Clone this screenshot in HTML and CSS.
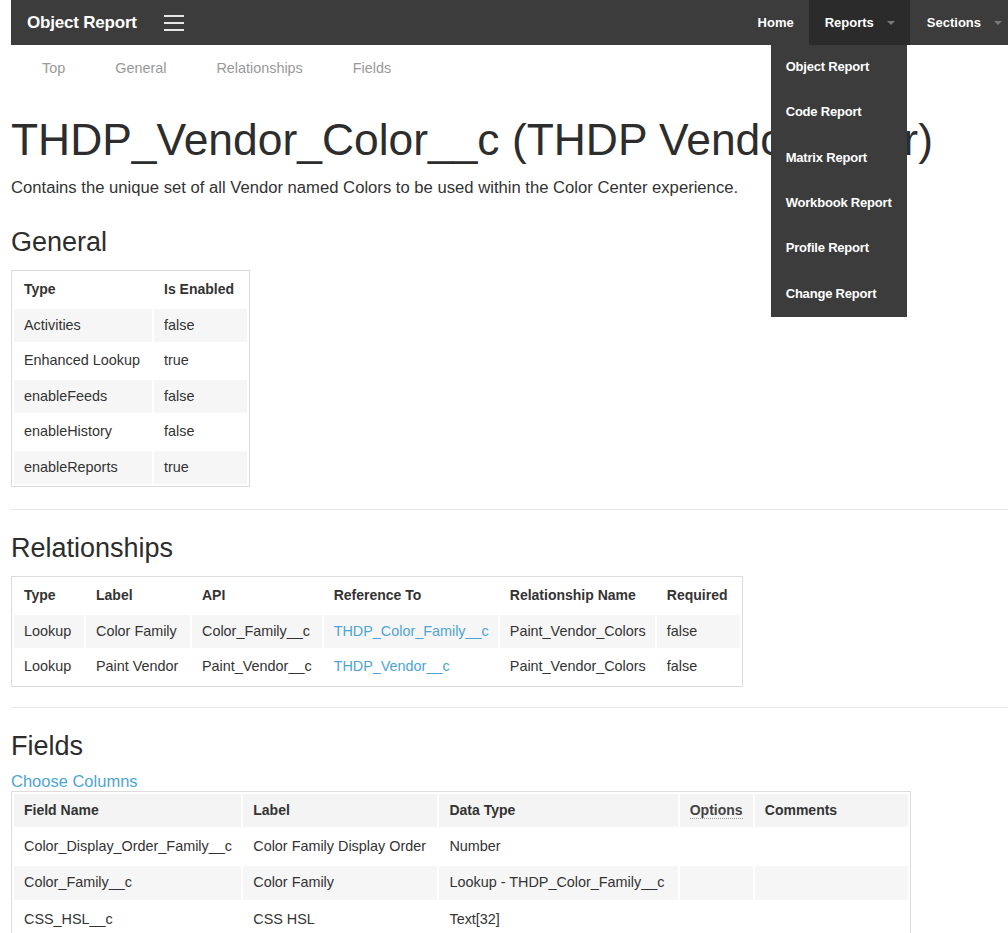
FILE: index.html
```html
<!DOCTYPE html>
<html>
<head>
<meta charset="utf-8">
<link rel="stylesheet" href="styles.css">
</head>
<body>
<div class="navbar">
  <div class="brand">Object Report</div>
  <div class="burger"><svg width="20" height="16" viewBox="0 0 20 16"><rect x="0" y="0" width="20" height="2" fill="#e6e6e6"/><rect x="0" y="7" width="20" height="2" fill="#e6e6e6"/><rect x="0" y="14" width="20" height="2" fill="#e6e6e6"/></svg></div>
  <div class="spacer"></div>
  <ul class="navlinks">
    <li class="item">Home</li>
    <li class="item active">Reports<span class="caret"></span>
      <ul class="dropdown">
        <li>Object Report</li>
        <li>Code Report</li>
        <li>Matrix Report</li>
        <li>Workbook Report</li>
        <li>Profile Report</li>
        <li>Change Report</li>
      </ul>
    </li>
    <li class="item">Sections<span class="caret"></span></li>
  </ul>
</div>
<div class="page">
  <ul class="subnav">
    <li>Top</li>
    <li>General</li>
    <li>Relationships</li>
    <li>Fields</li>
  </ul>
  <h1 class="title">THDP_Vendor_Color__c (THDP Vendor Color)</h1>
  <p class="desc">Contains the unique set of all Vendor named Colors to be used within the Color Center experience.</p>

  <h2 class="section first">General</h2>
  <table class="grid striped general">
    <thead><tr><th class="c1">Type</th><th class="c2">Is Enabled</th></tr></thead>
    <tbody>
      <tr><td>Activities</td><td>false</td></tr>
      <tr><td>Enhanced Lookup</td><td>true</td></tr>
      <tr><td>enableFeeds</td><td>false</td></tr>
      <tr><td>enableHistory</td><td>false</td></tr>
      <tr><td>enableReports</td><td>true</td></tr>
    </tbody>
  </table>
  <hr class="rule">

  <h2 class="section">Relationships</h2>
  <table class="grid striped rels">
    <thead><tr><th class="c1">Type</th><th class="c2">Label</th><th class="c3">API</th><th class="c4">Reference To</th><th class="c5">Relationship Name</th><th class="c6">Required</th></tr></thead>
    <tbody>
      <tr><td>Lookup</td><td>Color Family</td><td>Color_Family__c</td><td class="tight"><a class="link">THDP_Color_Family__c</a></td><td class="tight">Paint_Vendor_Colors</td><td>false</td></tr>
      <tr><td>Lookup</td><td>Paint Vendor</td><td>Paint_Vendor__c</td><td class="tight"><a class="link">THDP_Vendor__c</a></td><td class="tight">Paint_Vendor_Colors</td><td>false</td></tr>
    </tbody>
  </table>
  <hr class="rule second">

  <h2 class="section">Fields</h2>
  <a class="link choose">Choose Columns</a>
  <table class="grid fields">
    <thead><tr><th class="c1">Field Name</th><th class="c2">Label</th><th class="c3">Data Type</th><th class="c4"><abbr class="abbr">Options</abbr></th><th class="c5">Comments</th></tr></thead>
    <tbody>
      <tr><td>Color_Display_Order_Family__c</td><td>Color Family Display Order</td><td>Number</td><td></td><td></td></tr>
      <tr class="alt"><td>Color_Family__c</td><td>Color Family</td><td>Lookup - THDP_Color_Family__c</td><td></td><td></td></tr>
      <tr><td>CSS_HSL__c</td><td>CSS HSL</td><td>Text[32]</td><td></td><td></td></tr>
      <tr class="alt"><td>CSS_RGB__c</td><td>CSS RGB</td><td>Text[32]</td><td></td><td></td></tr>
    </tbody>
  </table>
</div>
</body>
</html>
```

FILE: styles.css
```css
html, body {
  margin: 0;
  padding: 0;
  background: #fff;
}
body {
  font-family: "Liberation Sans", Arial, Helvetica, sans-serif;
  color: #333;
  overflow: hidden;
  height: 933px;
}
ul {
  list-style: none;
  margin: 0;
  padding: 0;
}
.navbar {
  margin-left: 11px;
  height: 45px;
  background: #3c3c3c;
  display: flex;
  align-items: center;
  position: relative;
  z-index: 10;
}
.brand {
  color: #fff;
  font-weight: bold;
  font-size: 17px;
  letter-spacing: -0.2px;
  padding-left: 16px;
  line-height: 45px;
}
.burger {
  margin-left: 27px;
  display: flex;
  align-items: center;
  height: 45px;
}
.burger svg { display: block; }
.spacer { flex: 1; }
.navlinks {
  display: flex;
  height: 45px;
}
.item {
  position: relative;
  color: #fff;
  font-weight: bold;
  font-size: 13px;
  line-height: 45px;
  padding: 0 15px;
  display: flex;
  align-items: center;
}
.item.active {
  background: #2b2b2b;
  padding: 0 15px 0 16px;
}
.item:last-child {
  padding: 0 6px 0 17px;
}
.caret {
  display: inline-block;
  width: 0;
  height: 0;
  margin-left: 13px;
  border-top: 4px solid #7a7a7a;
  border-left: 4px solid transparent;
  border-right: 4px solid transparent;
}
.dropdown {
  position: absolute;
  top: 45px;
  left: -38px;
  width: 136px;
  height: 272px;
  background: #3c3c3c;
}
.dropdown li {
  height: 45.33px;
  line-height: 44px;
  padding-left: 15px;
  color: #fff;
  font-weight: bold;
  font-size: 13px;
  letter-spacing: -0.2px;
  white-space: nowrap;
}
.page {
  padding-left: 11px;
}
.subnav {
  display: flex;
  padding-left: 6px;
  height: 46px;
}
.subnav li {
  color: #999;
  font-size: 14.4px;
  line-height: 46px;
  padding: 0 25px;
}
.title {
  margin: 24px 0 0;
  font-size: 44.4px;
  line-height: 50px;
  font-weight: normal;
  color: #2d2d2d;
  white-space: nowrap;
}
.desc {
  margin: 13px 0 0;
  font-size: 16.65px;
  line-height: 20px;
  white-space: nowrap;
}
.section {
  margin: 23px 0 0;
  font-size: 27px;
  line-height: 30px;
  font-weight: normal;
  color: #2d2d2d;
}
.section.first {
  margin-top: 29px;
}
.grid {
  margin-top: 13px;
  border: 1px solid #dcdcdc;
  border-collapse: separate;
  border-spacing: 2px;
  font-size: 14.4px;
}
.grid th, .grid td {
  padding: 8px 10px;
  line-height: 17.5px;
  text-align: left;
  white-space: nowrap;
  color: #333;
}
.grid th {
  font-weight: bold;
  font-size: 14px;
}
.striped tbody tr:nth-child(odd) td {
  background: #f6f6f6;
}
.general .c1 { width: 118px; }
.general .c2 { width: 73px; }
.rels .tight, .rels .c4, .rels .c5 {
  padding-right: 9px;
}
.rels .c1 { width: 50px; }
.rels .c2 { width: 84px; }
.rels .c3 { width: 109px; }
.rels .c4 { width: 150px; }
.rels .c5 { width: 134px; }
.rels .c6 { width: 63px; }
.rule {
  margin: 22px 0 0;
  border: 0;
  border-top: 1px solid #e6e6e6;
  height: 0;
}
.rule.second {
  margin-top: 20px;
}
.link {
  color: #4ea5d2;
  text-decoration: none;
}
.choose {
  display: block;
  margin-top: 10px;
  font-size: 16.5px;
  line-height: 20px;
}
.fields {
  margin-top: 0;
  width: 900px;
  table-layout: fixed;
}
.fields th {
  background: #f4f4f4;
  padding-top: 8px;
  padding-bottom: 8px;
}
.fields td {
  padding-top: 8.5px;
  padding-bottom: 8.5px;
}
.fields .c1 { width: 207px; }
.fields .c2 { width: 174px; }
.fields .c3 { width: 218px; }
.fields .c4 { width: 53px; }
.fields .c5 { width: 133px; }
.fields tr.alt td {
  background: #f6f6f6;
}
.abbr {
  text-decoration: none;
  border-bottom: 1px dotted #999;
  color: #444;
}
```
